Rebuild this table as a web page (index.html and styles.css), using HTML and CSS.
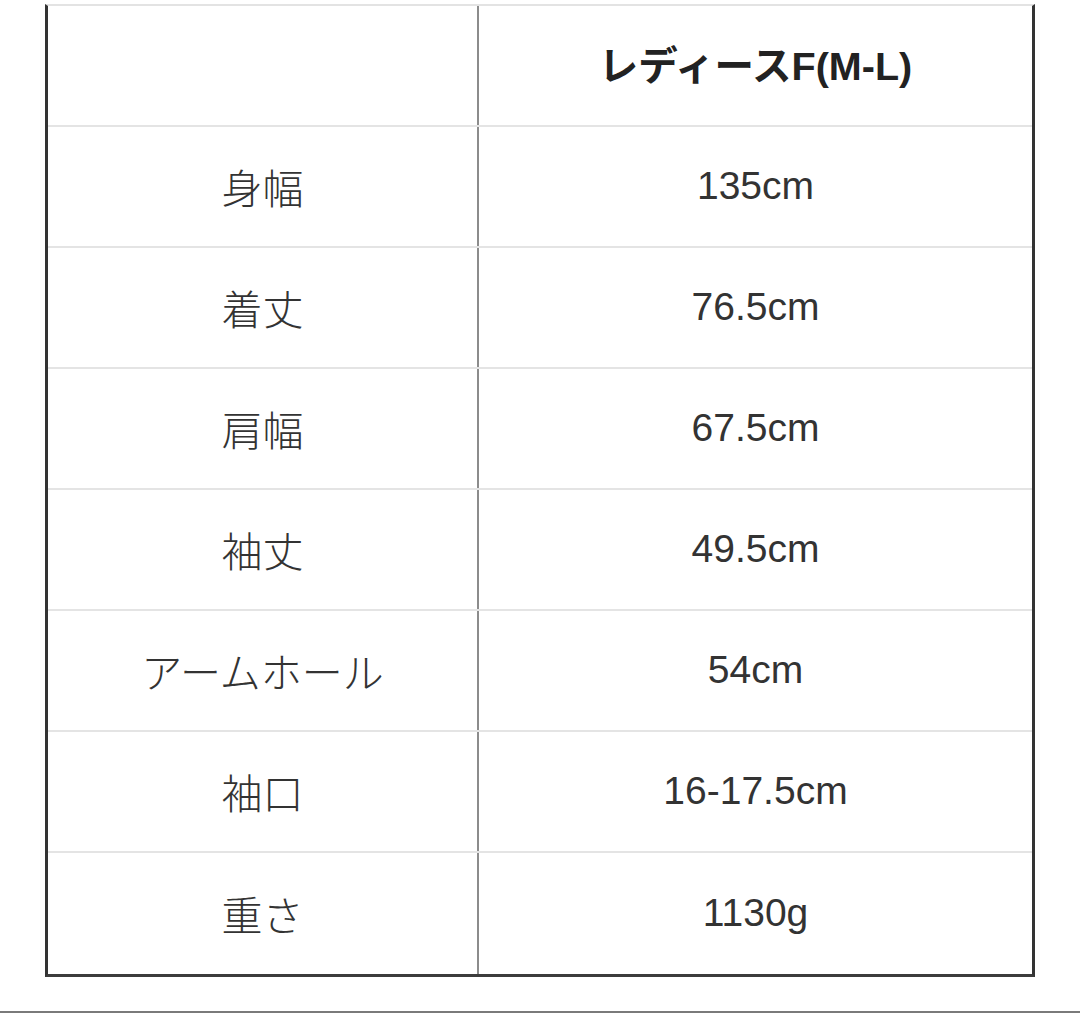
FILE: index.html
```html
<!DOCTYPE html>
<html lang="ja">
<head>
<meta charset="utf-8">
<link rel="stylesheet" href="styles.css">
</head>
<body>
<div class="sheet">
  <div class="row head"><div class="cell label"></div><div class="cell value">レディースF(M-L)</div></div>
  <div class="row"><div class="cell label">身幅</div><div class="cell value">135cm</div></div>
  <div class="row"><div class="cell label">着丈</div><div class="cell value">76.5cm</div></div>
  <div class="row"><div class="cell label">肩幅</div><div class="cell value">67.5cm</div></div>
  <div class="row"><div class="cell label">袖丈</div><div class="cell value">49.5cm</div></div>
  <div class="row"><div class="cell label">アームホール</div><div class="cell value">54cm</div></div>
  <div class="row"><div class="cell label">袖口</div><div class="cell value">16-17.5cm</div></div>
  <div class="row last"><div class="cell label">重さ</div><div class="cell value">1130g</div></div>
</div>
<div class="rule"></div>
</body>
</html>
```
FILE: styles.css
```css
html, body {
  margin: 0;
  padding: 0;
  background: #fff;
}
body {
  width: 1080px;
  height: 1015px;
  overflow: hidden;
  font-family: "Liberation Sans", "Noto Sans CJK JP", sans-serif;
  color: #333;
}
.sheet {
  margin: 4px 0 0 45px;
  width: 990px;
  box-sizing: border-box;
  border-top: 2px solid #e3e3e3;
  border-left: 3px solid #333;
  border-right: 3px solid #333;
  border-bottom: 3px solid #3c3c3c;
}
.row {
  display: grid;
  grid-template-columns: 431px 1fr;
  height: 121px;
  box-sizing: border-box;
  border-bottom: 2px solid #e4e4e4;
}
.row.last {
  border-bottom: none;
}
.cell {
  display: flex;
  align-items: center;
  justify-content: center;
  font-size: 39px;
  padding-bottom: 2px;
}
.label {
  border-right: 2px solid #8c8c8c;
  font-weight: 300;
  font-size: 41px;
}
.head .value {
  font-weight: bold;
  font-size: 39.5px;
  color: #222;
  padding-bottom: 6px;
}
.rule {
  margin-top: 34px;
  height: 2px;
  background: #7a7a7a;
}
```
